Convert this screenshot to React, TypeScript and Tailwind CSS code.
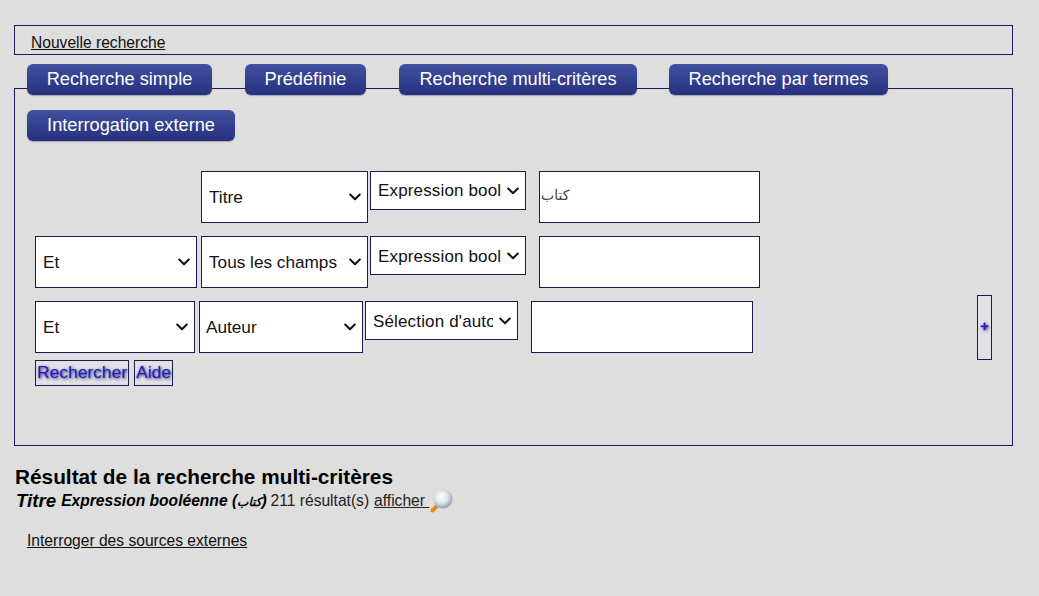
const tab = "inline-flex h-[31px] items-center justify-center rounded-[6px] bg-gradient-to-b from-[#41519f] to-[#27307f] pb-[1px] text-[18.2px] leading-none text-white shadow-[0_1px_1px_rgba(0,0,0,0.25)]";
const field = "h-[52px] w-full appearance-none rounded-none border border-[#1d1a4f] bg-white pr-[24px] pt-[1px] text-[17.2px] text-[#111]";
const short = "h-[39px] w-full appearance-none rounded-none border border-[#1d1a4f] bg-white pr-[24px] text-[17px] tracking-[0.15px] text-[#111]";
const input = "h-[52px] rounded-none border border-[#1d1a4f] bg-white px-[1px] text-[16px] text-[#222] outline-none";
const act = "h-[26px] border border-[#1d1a4f] bg-[#e0e0e6] p-0 pb-[1px] text-[17.4px] leading-none text-[#1a1ac8] [text-shadow:1px_1px_3px_rgba(10,10,80,0.9)]";

function Sel({ cls, wrap, value }: { cls: string; wrap: string; value: string }) {
  return (
    <div className={"relative shrink-0 " + wrap}>
      <select className={cls} defaultValue={value}>
        <option>{value}</option>
      </select>
      <svg width="12" height="8" viewBox="0 0 12 8" className="pointer-events-none absolute right-[7px] top-1/2 -translate-y-1/2" fill="none" stroke="#111" strokeWidth="2" strokeLinecap="round" strokeLinejoin="round">
        <path d="M1.2 1.5 L6 6.2 L10.8 1.5" />
      </svg>
    </div>
  );
}

function Magnifier() {
  return (
    <svg width="24" height="24" viewBox="0 0 24 24" className="shrink-0">
      <defs>
        <radialGradient id="lens" cx="42%" cy="38%" r="62%">
          <stop offset="0%" stopColor="#ffffff" />
          <stop offset="50%" stopColor="#e0e7ef" />
          <stop offset="100%" stopColor="#8ea2b7" />
        </radialGradient>
      </defs>
      <path d="M3.5 21.5 L7.5 17.5" stroke="#e98a1f" strokeWidth="4" strokeLinecap="round" />
      <circle cx="14" cy="10" r="9.6" fill="url(#lens)" />
    </svg>
  );
}

export default function App() {
  return (
    <div className="h-[596px] overflow-hidden bg-[#dedede] px-[14px] pt-[25px] font-['Liberation_Sans',Arial,sans-serif] text-[#111]">
      <div className="flex h-[30px] w-[999px] items-end border border-[#1d1a4f] pl-[16px]">
        <a href="#" className="text-[15.6px] leading-[23px] text-[#111] underline">Nouvelle recherche</a>
      </div>

      <div className="relative z-10 mt-[9px] flex pl-[13px]">
        <a className={tab + " w-[185px]"}>Recherche simple</a>
        <a className={tab + " ml-[33px] w-[121px]"}>Prédéfinie</a>
        <a className={tab + " ml-[33px] w-[238px]"}>Recherche multi-critères</a>
        <a className={tab + " ml-[32px] w-[219px]"}>Recherche par termes</a>
      </div>

      <div className="-mt-[7px] h-[358px] w-[999px] border border-[#1d1a4f] pl-[12px] pt-[21px]">
        <a className={tab + " w-[208px]"}>Interrogation externe</a>

        <div className="mt-[30px] flex h-[52px] items-start pl-[174px]">
          <Sel wrap="w-[167px]" cls={field + " pl-[7px]"} value="Titre" />
          <Sel wrap="ml-[2px] w-[156px]" cls={short + " pl-[7px]"} value="Expression bool" />
          <input className={input + " ml-[13px] w-[221px] pb-[5px] text-[#444]"} defaultValue="كتاب" dir="ltr" style={{ fontFamily: "'DejaVu Sans', sans-serif", fontSize: 14 }} />
        </div>

        <div className="mt-[13px] flex items-start pl-[8px]">
          <Sel wrap="w-[162px]" cls={field + " pl-[7px]"} value="Et" />
          <Sel wrap="ml-[4px] w-[167px]" cls={field + " pl-[7px]"} value="Tous les champs" />
          <Sel wrap="ml-[2px] w-[156px]" cls={short + " pl-[7px] pt-[2px]"} value="Expression bool" />
          <input className={input + " ml-[13px] w-[221px]"} />
        </div>

        <div className="mt-[7px] flex items-start pl-[8px]">
          <div className="mt-[6px] flex items-start">
            <Sel wrap="w-[160px]" cls={field + " pl-[7px]"} value="Et" />
            <Sel wrap="ml-[4px] w-[164px]" cls={field + " pl-[6px]"} value="Auteur" />
            <Sel wrap="ml-[2px] w-[153px]" cls={short + " pl-[7px] pt-[2px]"} value="Sélection d'autorité" />
            <input className={input + " ml-[13px] w-[222px]"} />
          </div>
          <button className="ml-[224px] h-[65px] w-[15px] border border-[#1d1a4f] bg-[#e0e0e6] p-0 pb-[4px] text-[15px] font-bold leading-none text-[#1a1ac8] [text-shadow:1px_1px_3px_rgba(10,10,80,0.9)]">+</button>
        </div>

        <div className="flex gap-[5px] pl-[8px]">
          <button className={act + " w-[94px]"}>Rechercher</button>
          <button className={act + " w-[39px]"}>Aide</button>
        </div>
      </div>

      <h1 className="ml-[1px] mt-[19px] text-[20.8px] font-bold leading-[23px] text-black">Résultat de la recherche multi-critères</h1>
      <div className="ml-[2px] mt-[1px] flex h-[24px] items-center text-[15.6px] leading-none text-[#222]">
        <b className="text-[18.7px] italic text-black">Titre</b>
        <b className="ml-[5px] italic text-black">Expression booléenne (<span className="font-['DejaVu_Sans'] text-[12px]">كتاب</span>)</b>
        <span className="ml-[4px]">211 résultat(s)</span>
        <a href="#" className="ml-[5px] whitespace-pre text-[#222] underline">afficher </a>
        <Magnifier />
      </div>
      <a href="#" className="ml-[13px] mt-[18px] block text-[15.6px] leading-[20px] text-[#111] underline">Interroger des sources externes</a>
    </div>
  );
}
